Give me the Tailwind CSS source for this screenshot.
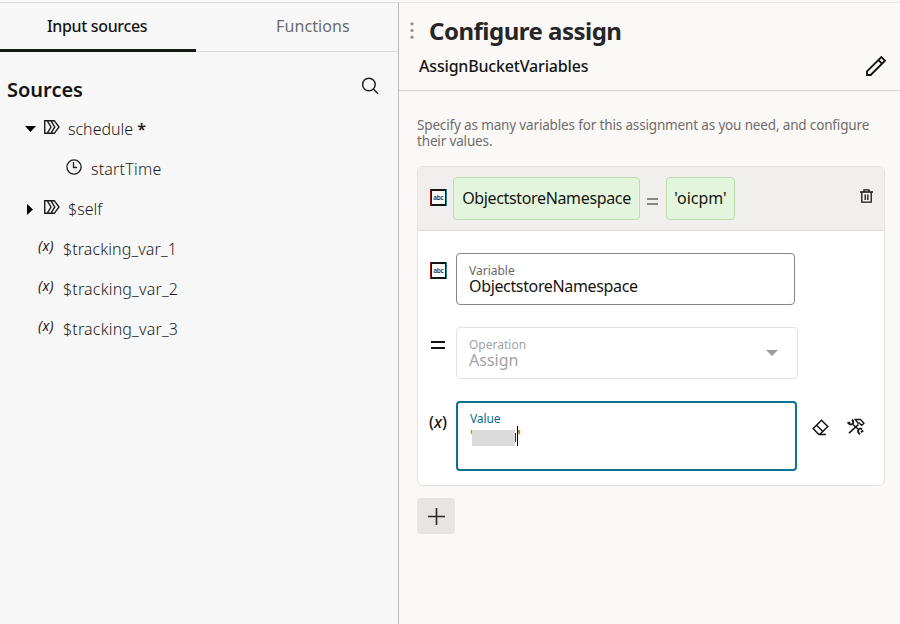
<!DOCTYPE html>
<html lang="en">
<head>
<meta charset="utf-8">
<title>Configure assign</title>
<script src="https://cdn.jsdelivr.net/npm/@tailwindcss/browser@4"></script>
</head>
<body class="w-[900px] h-[624px] overflow-hidden bg-[#fbf9f8] font-['Noto_Sans','Open_Sans',sans-serif] text-[#161513]">
<svg class="hidden">
  <symbol id="flow" viewBox="0 0 16 14"><path d="M.7.7h9.600L15 7l-4.700 6.300H.7zM3.200.7 7 7l-3.800 6.300M6.800.7 10.800 7l-4 6.300" fill="none" stroke="currentColor" stroke-width="1.400"/></symbol>
  <symbol id="abc" viewBox="0 0 17 17"><path d="M1 1h15v15H1z" fill="#fff" fill-opacity=".6" stroke="#161513" stroke-width="2"/><path d="M.5 0v17" stroke="#8b1a12"/><path d="M16.500 0v17" stroke="#23888b"/><text x="8.500" y="10.800" text-anchor="middle" font-size="6.500" font-weight="600" fill="#333" textLength="10.500">abc</text></symbol>
</svg>
<div class="flex h-full pt-[2px]">
  <aside class="w-[399px] shrink-0 border-r border-[#bcbcbc] border-t border-t-[#dcdcdc] bg-[#f7f7f7]">
    <div class="flex h-[49px] border-b border-[#dcdcdc] text-base leading-[46px]">
      <div class="w-[196px] h-[49px] shrink-0 border-b-[3px] border-[#161a14] pl-[47px] font-medium tracking-[-0.35px]">Input sources</div>
      <div class="pl-[80px] text-[#6b6b6b] tracking-[0.1px]">Functions</div>
    </div>
    <div class="flex justify-between pl-[7px] pr-[19px] pt-[22px] h-[57px]">
      <h2 class="text-[20px] leading-[32px] font-semibold">Sources</h2>
      <svg class="w-[18px] h-[18px] mt-[3px]" viewBox="0 0 18 18" fill="none" stroke="#222" stroke-width="1.500"><circle cx="7.900" cy="7.500" r="6.300"/><path d="m12.300 12 4.700 4.700"/></svg>
    </div>
    <ul class="text-base leading-[40px] text-[#1c1c1c] font-light">
      <li class="flex h-10 pl-[25px]"><svg class="w-[11px] h-[6px] mt-[17px]" viewBox="0 0 11 6"><path d="M0 0h11L5.500 6z"/></svg><svg class="w-4 h-[14px] ml-[8px] mt-[11px]"><use href="#flow"/></svg><span class="ml-[8px]">schedule</span><span class="ml-[4px] font-semibold">*</span></li>
      <li class="flex h-10 pl-[66px]"><svg class="w-4 h-4 mt-[10px]" viewBox="0 0 16 16" fill="none" stroke="currentColor" stroke-width="1.300"><circle cx="8" cy="8" r="7.100"/><path d="M7.500 3v5.500H11"/></svg><span class="ml-[9px] tracking-[0.2px]">startTime</span></li>
      <li class="flex h-10 pl-[27px]"><svg class="w-[6px] h-[11px] mt-[15px]" viewBox="0 0 6 11"><path d="M0 0v11L6 5.500z"/></svg><svg class="w-4 h-[14px] ml-[11px] mt-[11px]"><use href="#flow"/></svg><span class="ml-[8px]">$self</span></li>
      <li class="flex h-10 pl-[38px]"><span class="w-[25px] text-[14px] leading-[34px] font-normal italic tracking-[0.4px]">(x)</span><span class="tracking-[0.1px]">$tracking_var_1</span></li>
      <li class="flex h-10 pl-[38px]"><span class="w-[25px] text-[14px] leading-[34px] font-normal italic tracking-[0.4px]">(x)</span><span class="tracking-[0.18px]">$tracking_var_2</span></li>
      <li class="flex h-10 pl-[38px]"><span class="w-[25px] text-[14px] leading-[34px] font-normal italic tracking-[0.4px]">(x)</span><span class="tracking-[0.18px]">$tracking_var_3</span></li>
    </ul>
  </aside>
  <main class="flex-1 min-w-0 border-t border-[#e8e6e4]">
    <header class="h-[88px] border-b border-[#d6d4d2] flex">
      <div class="flex-1 pt-[11px]">
        <div class="flex">
          <svg class="w-1 h-[17px] ml-[11px] mt-[8px]" viewBox="0 0 4 17" fill="#8f8d8b"><circle cx="2" cy="1.800" r="1.600"/><circle cx="2" cy="8.500" r="1.600"/><circle cx="2" cy="15.200" r="1.600"/></svg>
          <h1 class="ml-[15px] text-[24px] leading-[34px] font-bold tracking-[-0.5px] text-[#262626]">Configure assign</h1>
        </div>
        <p class="ml-[20px] mt-[6px] text-base leading-6 font-medium tracking-[-0.18px]">AssignBucketVariables</p>
      </div>
      <svg class="w-[22px] h-[22px] mr-[13px] mt-[52px]" viewBox="0 0 22 22" fill="none" stroke="#161513" stroke-width="1.900"><path d="M2 20v-3.700L16.300 2l3.700 3.700L5.700 20zM13.300 5 17 8.700"/></svg>
    </header>
    <section class="pl-[18px] pt-[26px]">
      <p class="text-[13.500px] leading-4 text-[#6f6c69] tracking-[-0.155px] h-[49px]">Specify as many variables for this assignment as you need, and configure<br>their values.</p>
      <div class="w-[468px] h-[320px] rounded-md border border-[#e3e1de] bg-white overflow-hidden">
        <div class="flex h-16 border-b border-[#e0dedb] bg-[#f1efed] pl-[12px] pt-[10px]">
          <svg class="w-[17px] h-[17px] mt-[12px] mr-[6px]"><use href="#abc"/></svg>
          <div class="w-[187px] h-[43px] rounded border border-[#bcdcae] bg-[#e4f5dd] text-base leading-[41px] text-center tracking-[-0.35px]">ObjectstoreNamespace</div>
          <svg class="w-[11px] h-[7px] ml-[7px] mr-[8px] mt-[21px]" viewBox="0 0 11 7" stroke="#8a8783" stroke-width="2"><path d="M0 1h11M0 6h11"/></svg>
          <div class="w-[69px] h-[43px] rounded border border-[#bcdcae] bg-[#e4f5dd] text-base leading-[41px] text-center">'oicpm'</div>
          <svg class="w-[13px] h-[14px] ml-[125px] mt-[12px]" viewBox="0 0 13 14" fill="none" stroke="#161513" stroke-width="1.300"><path d="M0 3h13M4 3V.8h5V3M1.800 3v10.200h9.400V3M5.200 5.500v5.500M7.800 5.500v5.500"/></svg>
        </div>
        <div class="flex pl-[12px] pt-[22px]">
          <svg class="w-[17px] h-[17px] mt-[9px]"><use href="#abc"/></svg>
          <div class="ml-[9px] w-[339px] h-[52px] rounded-[4px] border border-[#858585] pl-[12px] pt-[10px]">
            <div class="text-[12px] leading-[14px] text-[#6b6967]">Variable</div>
            <div class="text-base leading-4 tracking-[-0.35px]">ObjectstoreNamespace</div>
          </div>
        </div>
        <div class="flex pl-[12px] pt-[22px]">
          <svg class="w-[14px] h-[8px] mt-[14px] ml-[1px]" viewBox="0 0 14 8" stroke="#161513" stroke-width="1.800"><path d="M0 1h14M0 7h14"/></svg>
          <div class="ml-[11px] w-[342px] h-[52px] rounded-[4px] border border-[#e2e2e2] pl-[12px] pt-[10px] flex justify-between text-[#a3a3a3]">
            <div><div class="text-[12px] leading-[14px]">Operation</div><div class="text-base leading-4">Assign</div></div>
            <svg class="w-[12px] h-[6px] mr-[19px] mt-[12px]" viewBox="0 0 12 6" fill="#9a9a9a"><path d="M0 0h12L6 6z"/></svg>
          </div>
        </div>
        <div class="flex pl-[11px] pt-[22px]">
          <span class="w-[27px] text-base leading-[42px] font-medium">(<i>x</i>)</span>
          <div class="w-[341px] h-[70px] rounded-[4px] border-2 border-[#0b7295] pl-[12px] pt-[9px]">
            <div class="text-[12px] leading-[14px] text-[#0b6e90] tracking-[-0.1px]">Value</div>
            <div class="flex h-[20px] pt-[1px] text-base leading-[18px]"><span class="w-[2px] font-semibold text-[#b07020]">'</span><span class="w-[43px] h-4 mt-[3px] bg-[#dbdbdb]"></span><span class="w-[1px] h-[9px] mt-[6px] bg-[#3a2a5c]"></span><span class="w-px h-5 mt-[-1px] ml-[1px] bg-black"></span><span class="ml-[-1px] font-semibold text-[#b07020]">'</span></div>
          </div>
          <svg class="w-[17px] h-[17px] ml-[15px] mt-[18px]" viewBox="0 0 17 17" fill="none" stroke="#161513" stroke-width="1.500"><path d="m9.500 1.200 6.300 6.300L8 15.300H6.500L1.200 9.500zM4.600 6.200l6.300 6.300M7 15.600h7"/></svg>
          <svg class="w-[18px] h-[17px] ml-[18px] mt-[17px]" viewBox="0 0 18 17" fill="none" stroke="#161513"><path d="M2 15.200 11.500 6.500M6 6.500l5 4.500" stroke-width="1.600"/><path d="M8.300 1.500h5.200l3.500 3.800-2.200 2-2.800-2.300H10.800z" stroke-width="1.300"/><path d="M5 1.500C6.700 3 6.500 5 5.300 6 3.700 6.900 1.500 6.200.8 4.300" stroke-width="1.900"/><path d="M1 4.300 3.300 4.500" stroke-width="1.300"/><path d="M15 11.300c-1.500-1.200-3.800-.4-4 1.500 0 1.500.8 2.700 2.200 3.200M16.200 12.500 14 14.300" stroke-width="1.800"/></svg>
        </div>
      </div>
      <button class="mt-3 block w-[38px] h-9 rounded bg-[#e7e5e4] pl-[11px]"><svg class="w-[17px] h-[17px]" viewBox="0 0 17 17" stroke="#2a2824" stroke-width="1.600"><path d="M8.500 0v17M0 8.500h17"/></svg></button>
    </section>
  </main>
</div>
</body>
</html>
